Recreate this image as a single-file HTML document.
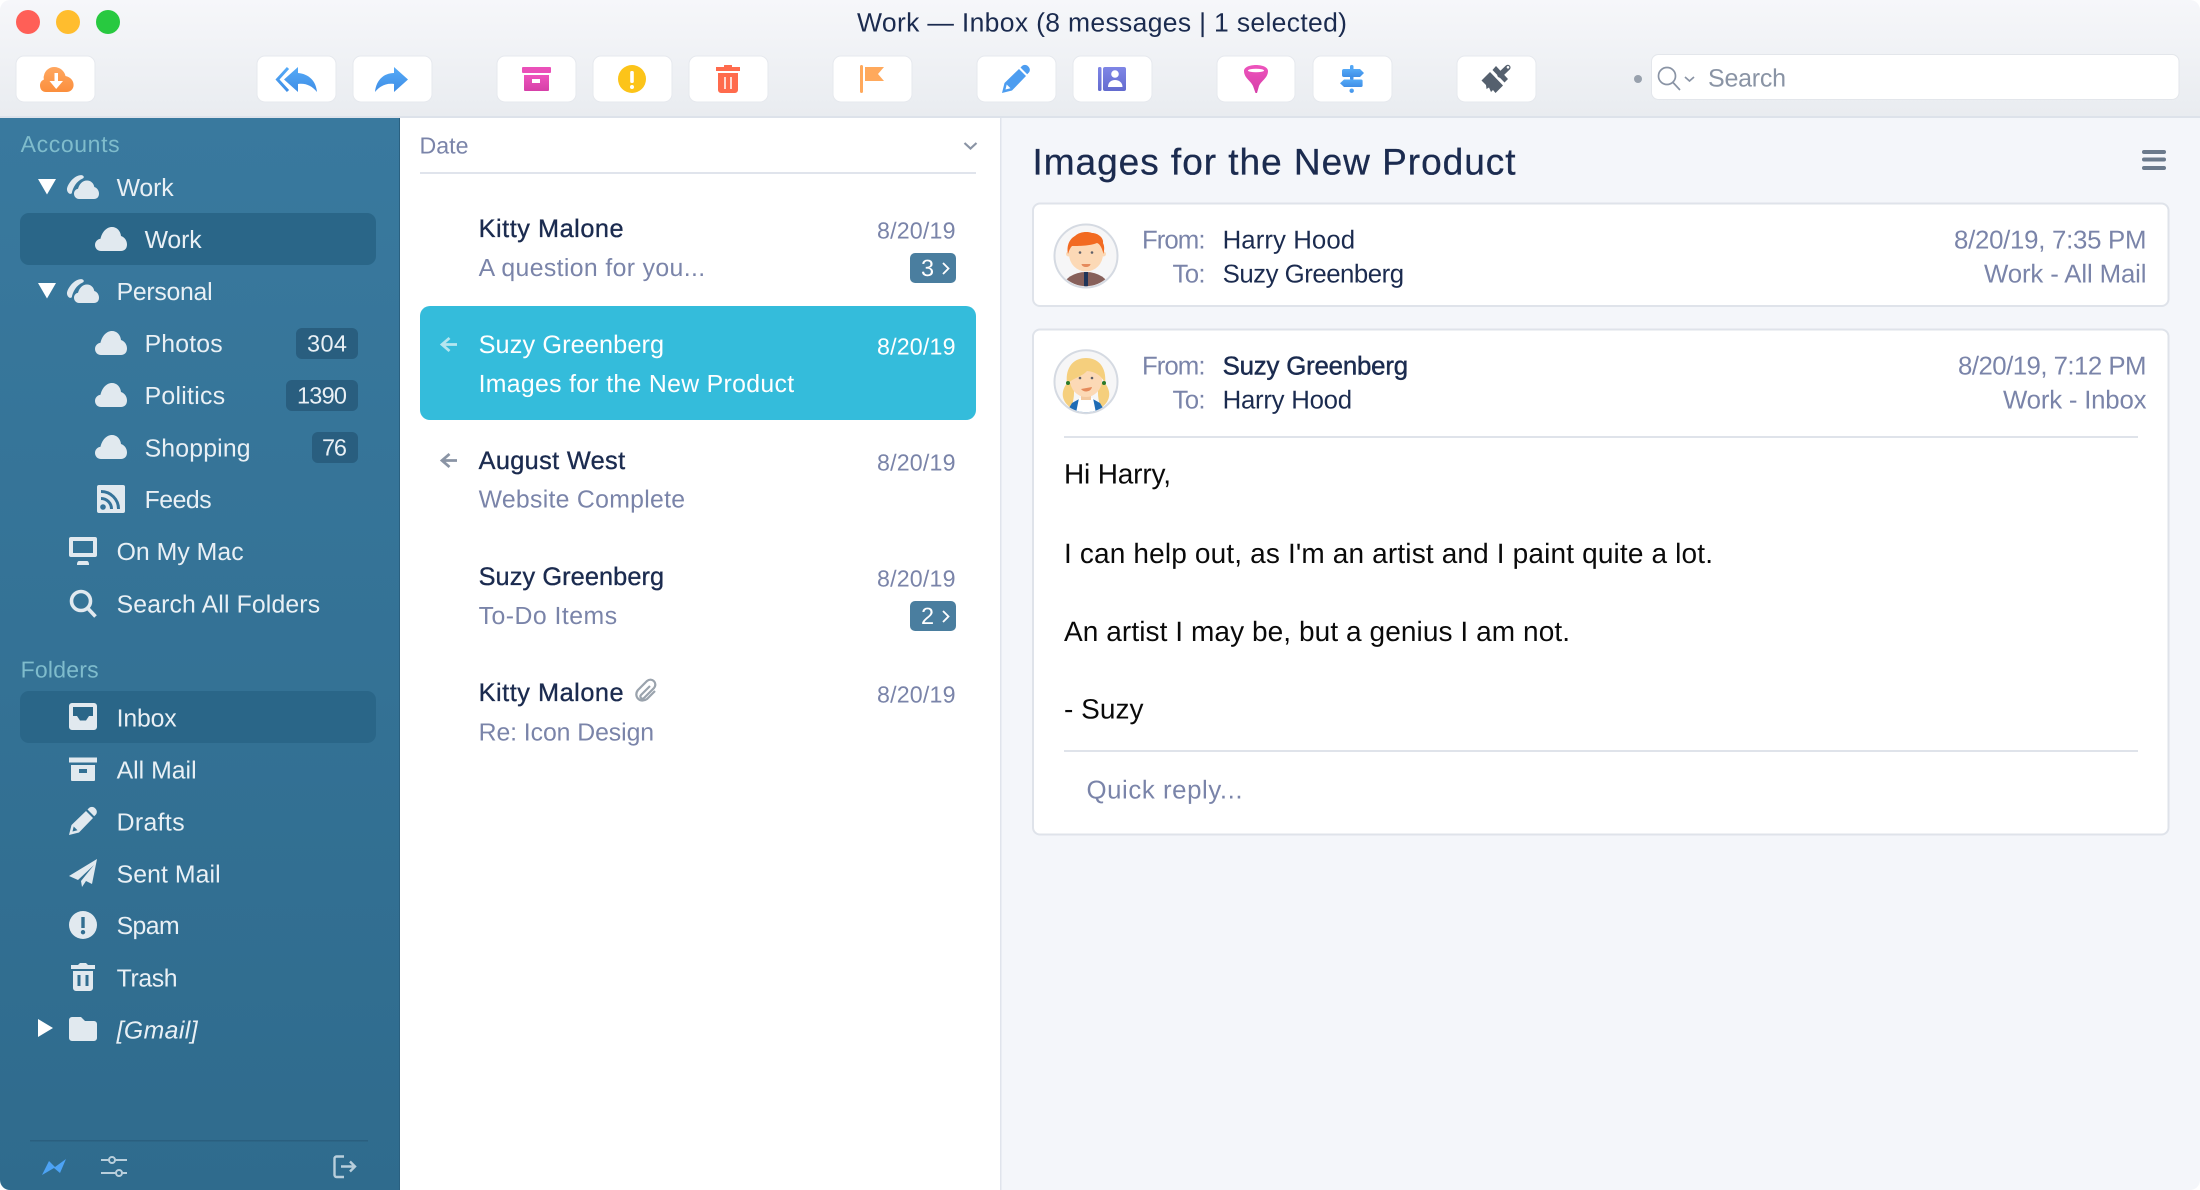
<!DOCTYPE html>
<html lang="en"><head><meta charset="utf-8"><title>Work — Inbox</title>
<style>
html,body{margin:0;padding:0;background:#fff;width:2200px;height:1190px;overflow:hidden}
svg{display:block}
text{font-family:"Liberation Sans",sans-serif;text-rendering:geometricPrecision;white-space:pre}
.s{font-size:24.8px;fill:#e9f0f5;transform:translate(-.4px,.4px)}
.h{font-size:23px;fill:#7fbccc;transform:translate(-.4px,.4px)}
.c{font-size:23.5px;fill:#e9f0f5}
.n{font-size:25.3px;fill:#1b2b4f;stroke:#1b2b4f;stroke-width:.35px;transform:translate(-.4px,.6px)}
.m{font-size:24.8px;fill:#7a84a9;transform:translate(-.4px,.6px)}
.d{font-size:23.2px;fill:#7a84a9}
.w{fill:#fff;stroke:none}
.f{font-size:25.8px;fill:#7a84a9;transform:translateY(.4px)}
.v{font-size:25.8px;fill:#1b2b4f;transform:translate(-.4px,.4px)}
.b{font-size:28px;fill:#0a0a0a;transform:translateY(.5px)}
.i{fill:#e1e9ef}
.btn{fill:#fff;stroke:#e6e9ee;stroke-width:1}
.card{fill:#fff;stroke:#dfe3ea;stroke-width:2}
</style></head><body>
<svg width="2200" height="1190" viewBox="0 0 2200 1190" xmlns="http://www.w3.org/2000/svg">
<defs>
<linearGradient id="tb" x1="0" y1="0" x2="0" y2="1"><stop offset="0" stop-color="#f6f7fa"/><stop offset="1" stop-color="#e9ecf0"/></linearGradient>
<linearGradient id="sb" x1="0" y1="0" x2="0" y2="1"><stop offset="0" stop-color="#39799e"/><stop offset="1" stop-color="#2f6b8d"/></linearGradient>
<linearGradient id="org" x1="0" y1="0" x2="0" y2="1"><stop offset="0" stop-color="#ffa760"/><stop offset="1" stop-color="#fb8f3d"/></linearGradient>
<linearGradient id="pnk" x1="0" y1="0" x2="0" y2="1"><stop offset="0" stop-color="#ee54bd"/><stop offset="1" stop-color="#d63fa8"/></linearGradient>
<linearGradient id="blu" x1="0" y1="0" x2="0" y2="1"><stop offset="0" stop-color="#55aaf7"/><stop offset="1" stop-color="#3f8ee6"/></linearGradient>
<linearGradient id="pur" x1="0" y1="0" x2="0" y2="1"><stop offset="0" stop-color="#7f86e6"/><stop offset="1" stop-color="#636bcf"/></linearGradient>
<clipPath id="win"><rect width="2200" height="1190" rx="10"/></clipPath>
<clipPath id="a1"><circle cx="1086" cy="255.7" r="30.5"/></clipPath>
<clipPath id="a2"><circle cx="1086" cy="381.7" r="30.5"/></clipPath>
<symbol id="cloud" viewBox="0 0 32 24" overflow="visible"><path d="M6 24C2.5 24 0 21.2 0 18 0 14.6 2.6 12.2 5.5 11.8 7 5 11.5 0 17 0 22 0 25.5 4 26 9 29.5 10 32 13.5 32 17.5 32 21.5 29.5 24 26 24Z"/></symbol>
<symbol id="dcloud" viewBox="0 0 32 24" overflow="visible"><path d="M12 24C9.5 24 7 22 7 18.8 7 16 9 14.2 11 13.8 12.3 9 15.5 5.5 20 5.5 24 5.5 26.8 8.5 27.3 12 30 12.8 32 15.5 32 18.5 32 22 30 24 27 24Z"/><path d="M15 .2C9 -.8 1.5 7 0 13.5-.5 16.5 2.5 20.5 4.8 18.2 5.6 13 9.5 6 15.5 3.6 17.5 2.8 17 .6 15 .2Z"/></symbol>
<symbol id="pencil" viewBox="0 0 28 28" overflow="visible"><path fill-rule="evenodd" d="M0 28 2.5 18 17 4 24 11 10 25.5ZM3.500 24.500 8.500 23.300 4.700 19.500Z"/><path d="M18.500 2.500 20 1C22-.7 24.500-.5 26.300 1.500 28.300 3.500 28.300 6 26.700 7.800L25.200 9.300Z"/></symbol>
</defs>
<g clip-path="url(#win)">
<!-- toolbar -->
<rect width="2200" height="116" fill="url(#tb)"/>
<rect y="116" width="2200" height="2" fill="#dde2ea"/>
<circle cx="28" cy="22" r="12" fill="#ff5f57"/><circle cx="68" cy="22" r="12" fill="#ffbd2e"/><circle cx="108" cy="22" r="12" fill="#28c940"/>
<text x="857" y="31.500" font-size="26.5" fill="#1b2b4f" textLength="490">Work — Inbox (8 messages | 1 selected)</text>

<rect class="btn" x="16" y="56" width="79" height="46" rx="8"/>
<rect class="btn" x="257" y="56" width="79" height="46" rx="8"/>
<rect class="btn" x="353" y="56" width="79" height="46" rx="8"/>
<rect class="btn" x="497" y="56" width="79" height="46" rx="8"/>
<rect class="btn" x="593" y="56" width="79" height="46" rx="8"/>
<rect class="btn" x="689" y="56" width="79" height="46" rx="8"/>
<rect class="btn" x="833" y="56" width="79" height="46" rx="8"/>
<rect class="btn" x="977" y="56" width="79" height="46" rx="8"/>
<rect class="btn" x="1073" y="56" width="79" height="46" rx="8"/>
<rect class="btn" x="1217" y="56" width="78" height="46" rx="8"/>
<rect class="btn" x="1313" y="56" width="79" height="46" rx="8"/>
<rect class="btn" x="1457" y="56" width="79" height="46" rx="8"/>

<!-- toolbar icons -->
<path fill="url(#org)" d="M46 92C42 92 40 89 40 85.500 40 82.500 41.500 80.500 44 79.500 43.500 78 43.500 77 44 75.500 45 70 50 67 54 67 60 67 64.500 71 65.500 76 70.500 77 73.600 80.500 73.600 85 73.600 89 70.500 92 66.500 92Z"/>
<path fill="#fff" d="M54.500 73h3.500v8h5l-6.800 8-6.700-8h5z"/>
<path fill="none" stroke="url(#blu)" stroke-width="3" d="M288 68 277.500 79.500 288 91"/>
<path fill="url(#blu)" d="M298 67 284 79.500 298 92V84C306 83 312 86 317 92 316 81 309 74 298 73Z"/>
<path fill="url(#blu)" d="M394 67 408 79.500 394 92V84C386 83 380 86 375 92 376 80 384 73 394 73Z"/>
<rect x="522" y="67" width="29" height="6" rx="1" fill="#ea50b9"/>
<path fill="url(#pnk)" fill-rule="evenodd" d="M524 75H549V90A1 1 0 0 1 548 91H525A1 1 0 0 1 524 90ZM532 79V83H540V79Z"/>
<circle cx="632" cy="79" r="14" fill="#fcc419"/><rect x="630.200" y="71" width="3.600" height="12" rx="1.500" fill="#fff"/><circle cx="632" cy="87" r="2" fill="#fff"/>
<path fill="#ff6b4d" d="M724 67V65.500A.5.5 0 0 1 724.500 65H731.500A.5.5 0 0 1 732 65.500V67H740V71H716V67ZM718 73H738V90A3 3 0 0 1 735 93H721A3 3 0 0 1 718 90Z"/>
<path stroke="#fff" stroke-width="1.500" d="M725 77V89M731 77V89"/>
<rect x="860" y="65" width="3" height="28" rx="1.500" fill="#ffa95c"/><path fill="#ffa95c" d="M865 67H884L878 74 884 81H865Z"/>
<use href="#pencil" x="1002" y="65" width="28" height="28" fill="#4d9df0"/>
<rect x="1098" y="67" width="3.500" height="24" rx="1.500" fill="url(#pur)"/>
<rect x="1103" y="67" width="23" height="24" rx="2" fill="url(#pur)"/>
<circle cx="1115" cy="74" r="3.800" fill="#fff"/><path fill="#fff" d="M1108 87C1108 82.500 1111 80 1115 80 1119 80 1122.500 82.500 1122.500 87Z"/>
<path fill="url(#pnk)" d="M1244 71C1244 67 1250 65 1256 65 1262 65 1268 67 1268 71 1268 78 1261 81 1259 86L1257 93H1255.500L1253 86C1251 81 1244 78 1244 71Z"/>
<ellipse cx="1256" cy="70.500" rx="8" ry="1.800" fill="#fff"/>
<g fill="url(#blu)"><rect x="1350" y="65" width="3.500" height="15" rx="1.500"/><path d="M1344 69H1360L1364 73 1360 77H1344Q1342 77 1342 75V71Q1342 69 1344 69Z"/><path d="M1344 79.500H1361Q1362.600 79.500 1362.600 81V85.500Q1362.600 87 1361 87H1344L1340 83.200Z"/><circle cx="1351.700" cy="90.700" r="2.200"/></g>
<g fill="#55606e"><path d="M1481.500 80.500 1490 72 1503 85.500 1495.500 93 1493 90 1491 92 1489 87.500 1486.500 89 1486 85Z"/><path d="M1492.500 70 1496 66 1508 79 1504.500 82.500Z"/></g>
<path stroke="#55606e" stroke-width="5.500" stroke-linecap="round" d="M1500 75 1507.800 67.500"/>
<circle cx="1508" cy="67.300" r="1.300" fill="#fff"/>

<!-- search -->
<circle cx="1638" cy="79" r="4" fill="#98a1ad"/>
<rect x="1651.500" y="54.500" width="527.500" height="45" rx="7" fill="#fff" stroke="#e3e6eb"/>
<circle cx="1667" cy="76" r="8.500" fill="none" stroke="#8a94a5" stroke-width="1.700"/>
<path stroke="#8a94a5" stroke-width="1.700" fill="none" d="M1673 82.500 1680 90M1685 77 1689.500 81 1694 77"/>
<text x="1708" y="86.300" font-size="25" fill="#8a94a5" textLength="78">Search</text>

<!-- sidebar -->
<rect y="118" width="400" height="1072" fill="url(#sb)"/>
<rect x="399" y="118" width="1" height="1072" fill="#2a6080"/>
<text class="h" x="21" y="151.500" textLength="99">Accounts</text>
<rect x="20" y="213" width="356" height="52" rx="9" fill="#2a6688"/>
<path fill="#fff" d="M38 179H56L47 194.500ZM38 283H56L47 298.500Z"/>
<use href="#dcloud" x="67" y="175" width="32" height="24" class="i"/>
<text class="s" x="117" y="195.500" textLength="57">Work</text>
<use href="#cloud" x="95" y="227" width="32" height="24" class="i"/>
<text class="s" x="145" y="247.500" textLength="57">Work</text>
<use href="#dcloud" x="67" y="279" width="32" height="24" class="i"/>
<text class="s" x="117" y="299.500" textLength="96">Personal</text>
<use href="#cloud" x="95" y="331" width="32" height="24" class="i"/>
<text class="s" x="145" y="351.500" textLength="78">Photos</text>
<rect x="296" y="328" width="62" height="31" rx="6" fill="#295e7f"/><text class="c" x="307" y="351.500" textLength="40">304</text>
<use href="#cloud" x="95" y="383" width="32" height="24" class="i"/>
<text class="s" x="145" y="403.500" textLength="80.500">Politics</text>
<rect x="286" y="380" width="72" height="31" rx="6" fill="#295e7f"/><text class="c" x="297" y="403.500" textLength="50">1390</text>
<use href="#cloud" x="95" y="435" width="32" height="24" class="i"/>
<text class="s" x="145" y="456" textLength="106">Shopping</text>
<rect x="312" y="432" width="46" height="31" rx="6" fill="#295e7f"/><text class="c" x="322" y="455.500" textLength="25">76</text>
<rect x="97" y="485" width="28" height="28" rx="2" class="i"/>
<circle cx="103" cy="507" r="2.800" fill="#35739a"/>
<path fill="none" stroke="#35739a" stroke-width="3" d="M101 498.500A10.500 10.500 0 0 1 111.500 509M101 491.500A17.500 17.500 0 0 1 118.500 509"/>
<text class="s" x="145" y="507.500" textLength="67">Feeds</text>
<path class="i" fill-rule="evenodd" d="M71 537H95A2 2 0 0 1 97 539V555A2 2 0 0 1 95 557H71A2 2 0 0 1 69 555V539A2 2 0 0 1 71 537ZM73 541V553H93V541ZM79 561H87Q89 561 89 565H77Q77 561 79 561Z"/>
<text class="s" x="117" y="559.500" textLength="127">On My Mac</text>
<circle cx="81" cy="601" r="9.500" fill="none" stroke="#e1e9ef" stroke-width="3.600"/>
<path stroke="#e1e9ef" stroke-width="3.600" d="M87.500 608 95.500 616.500"/>
<text class="s" x="117" y="612" textLength="203.500">Search All Folders</text>

<text class="h" x="21" y="677" textLength="78">Folders</text>
<rect x="20" y="691" width="356" height="52" rx="9" fill="#2a6688"/>
<path class="i" fill-rule="evenodd" d="M72 703H94A3 3 0 0 1 97 706V727A3 3 0 0 1 94 730H72A3 3 0 0 1 69 727V706A3 3 0 0 1 72 703ZM73 707V716H77L80 720.500H86L89 716H93V707Z"/>
<text class="s" x="117" y="726" textLength="60">Inbox</text>
<path class="i" fill-rule="evenodd" d="M69 757.500H97V762.500H69ZM71 765H95V780A1 1 0 0 1 94 781H72A1 1 0 0 1 71 780ZM79 769V773H87V769Z"/>
<text class="s" x="117" y="778" textLength="80">All Mail</text>
<use href="#pencil" x="69" y="807" width="28" height="28" class="i"/>
<text class="s" x="117" y="830" textLength="68">Drafts</text>
<path class="i" d="M97 859 69 876 78 880 94 865 81 881 82 887 86 881 92 884Z"/>
<text class="s" x="117" y="882" textLength="104">Sent Mail</text>
<path class="i" fill-rule="evenodd" d="M83 911A14 14 0 1 1 83 939 14 14 0 1 1 83 911ZM81.300 917V928H84.700V917ZM83 930A2.200 2.200 0 1 0 83 934.400 2.200 2.200 0 1 0 83 930Z"/>
<text class="s" x="117" y="933.500" textLength="63">Spam</text>
<path class="i" fill-rule="evenodd" d="M78 965 80 963H86L88 965H95V969H71V965ZM73 971H93V988A3 3 0 0 1 90 991H76A3 3 0 0 1 73 988ZM77.500 975V986H80.500V975ZM85.500 975V986H88.500V975Z"/>
<text class="s" x="117" y="986" textLength="61">Trash</text>
<path fill="#fff" d="M38 1019 53 1028 38 1037Z"/>
<path class="i" d="M69 1020A3 3 0 0 1 72 1017H81L85 1021H94A3 3 0 0 1 97 1024V1038A3 3 0 0 1 94 1041H72A3 3 0 0 1 69 1038Z"/>
<text class="s" x="117" y="1038" font-style="italic" textLength="81">[Gmail]</text>
<rect x="30" y="1140" width="338" height="1.500" fill="#2a5f7f"/>
<path fill="#4da3f5" d="M42 1175 49 1161 55 1167 66 1159 60 1173 54 1168Z"/>
<path stroke="#b9cfdc" stroke-width="2" d="M101 1160H127M101 1173H127"/>
<circle cx="112" cy="1160" r="3" fill="#2f6b8d" stroke="#b9cfdc" stroke-width="2"/>
<circle cx="119" cy="1173" r="3" fill="#2f6b8d" stroke="#b9cfdc" stroke-width="2"/>
<path fill="none" stroke="#b9cfdc" stroke-width="2.400" d="M344 1156.500H336.500A2 2 0 0 0 334.500 1158.500V1175A2 2 0 0 0 336.500 1177H344M341 1166.500H355M350 1161.500 355 1166.500 350 1171.500"/>

<!-- list column -->
<rect x="400" y="118" width="600" height="1072" fill="#fff"/>
<rect x="1000" y="118" width="1.500" height="1072" fill="#e0e4ec"/>
<text class="d" x="419.500" y="153.500" textLength="49">Date</text>
<path fill="none" stroke="#8a94a5" stroke-width="2.200" d="M964.500 143 970.500 148.500 976.500 143"/>
<rect x="420" y="172" width="556" height="2" fill="#e0e4ec"/>

<text class="n" x="479" y="236.500" textLength="145">Kitty Malone</text>
<text class="d" x="877" y="238.300" textLength="78.500">8/20/19</text>
<text class="m" x="479" y="275.500" textLength="226.500">A question for you...</text>
<rect x="910" y="253" width="46" height="30" rx="5" fill="#4a7e9f"/>
<text class="c" x="921" y="276" style="fill:#fff">3</text>
<path fill="none" stroke="#fff" stroke-width="1.800" d="M943 263 948.500 268.500 943 274"/>

<rect x="420" y="306" width="556" height="114" rx="10" fill="#34bcdb"/>
<path fill="none" stroke="#b5e6f0" stroke-width="2.800" d="M457 344.500H442.500M449.500 338 442 344.500 449.500 351"/>
<text class="n w" x="479" y="352.500" textLength="185.500">Suzy Greenberg</text>
<text class="d" x="877" y="354.300" textLength="78.500" style="fill:#fff">8/20/19</text>
<text class="m" x="479" y="391.500" textLength="315.500" style="fill:#fff">Images for the New Product</text>

<path fill="none" stroke="#8a94a5" stroke-width="2.800" d="M457 460.500H442.500M449.500 454 442 460.500 449.500 467"/>
<text class="n" x="479" y="468.500" textLength="146.500">August West</text>
<text class="d" x="877" y="470.300" textLength="78.500">8/20/19</text>
<text class="m" x="479" y="507" textLength="206.500">Website Complete</text>

<text class="n" x="479" y="584.500" textLength="185.500">Suzy Greenberg</text>
<text class="d" x="877" y="586.300" textLength="78.500">8/20/19</text>
<text class="m" x="479" y="623.500" textLength="138.500">To-Do Items</text>
<rect x="910" y="601" width="46" height="30" rx="5" fill="#4a7e9f"/>
<text class="c" x="921" y="624" style="fill:#fff">2</text>
<path fill="none" stroke="#fff" stroke-width="1.800" d="M943 611 948.500 616.500 943 622"/>

<text class="n" x="479" y="700.500" textLength="145">Kitty Malone</text>
<path fill="none" stroke="#9aa3ad" stroke-width="2.200" d="M650 686 641 695C639 697 642 700 644 698L654 688C658 683 652 677 647 681L638 690C633 696 640 704 647 699L655 691"/>
<text class="d" x="877" y="702.300" textLength="78.500">8/20/19</text>
<text class="m" x="479" y="740" textLength="175.500">Re: Icon Design</text>

<!-- message pane -->
<rect x="1001.500" y="118" width="1198.500" height="1072" fill="#f4f6fa"/>
<text x="1032.500" y="174.700" font-size="37" fill="#1b2b4f" stroke="#1b2b4f" stroke-width=".3" textLength="483">Images for the New Product</text>
<rect x="2142" y="150" width="24" height="4" rx="2" fill="#6b7a8c"/><rect x="2142" y="157.500" width="24" height="4" rx="2" fill="#6b7a8c"/><rect x="2142" y="166" width="24" height="4" rx="2" fill="#6b7a8c"/>

<rect class="card" x="1033" y="203.500" width="1135.500" height="102.500" rx="7"/>
<circle cx="1086" cy="256" r="31.500" fill="#f6f6f7" stroke="#d5dae2" stroke-width="2"/>
<g clip-path="url(#a1)">
<ellipse cx="1086" cy="288" rx="23" ry="16" fill="#87605a"/>
<path fill="#1f3559" d="M1084 272H1088V290H1084Z"/>
<circle cx="1068.500" cy="254" r="2.500" fill="#fcd9b6"/><circle cx="1103.500" cy="254" r="2.500" fill="#fcd9b6"/>
<ellipse cx="1086" cy="254" rx="17" ry="17.500" fill="#fcd9b6"/>
<path fill="#f26a21" d="M1068 254C1066 244 1071 238 1075 236 1079 232 1087 231 1092 233 1098 233 1104 238 1103 243 1105 247 1104 251 1103.500 254 1102 248 1100 244 1097 243 1090 246 1078 246 1072 246 1070 248 1069 251 1068 254Z"/>
<circle cx="1080" cy="252.500" r="1.300" fill="#5d5f68"/><circle cx="1092" cy="252.500" r="1.300" fill="#5d5f68"/>
<path fill="#e58a5b" d="M1081.500 264H1090.500C1090 268 1082 268 1081.500 264Z"/>
</g>

<rect class="card" x="1033" y="329.500" width="1135.500" height="505" rx="7"/>
<circle cx="1086" cy="381.700" r="31.500" fill="#f6f6f7" stroke="#d5dae2" stroke-width="2"/>
<g clip-path="url(#a2)">
<path fill="#f5cf7d" d="M1068 382C1061 390 1060 400 1071 408 1074 400 1075 392 1073 384ZM1104 382C1111 390 1112 400 1101 408 1098 400 1097 392 1099 384Z"/>
<path fill="#1f6cb5" d="M1066 413 1072 403 1081 398H1091L1100 403 1106 413Z"/>
<path fill="#fff" d="M1079 398H1093L1096 413H1076Z"/>
<rect x="1081" y="390" width="10" height="10" fill="#f3c9a0"/>
<ellipse cx="1086" cy="380" rx="16" ry="17" fill="#fcd9b6"/>
<path fill="#f5cf7d" d="M1067 384C1065 368 1073 358 1086 358 1099 358 1107 368 1105 384 1103 378 1098 372 1087 371 1083 376 1073 378 1067 384Z"/>
<circle cx="1068" cy="383" r="2" fill="#2a7a2a"/><circle cx="1104" cy="383" r="2" fill="#2a7a2a"/>
<circle cx="1080" cy="378" r="1.300" fill="#5d5f68"/><circle cx="1092" cy="378" r="1.300" fill="#5d5f68"/>
<path fill="#e58a5b" d="M1081 389 1092 387C1091 392 1084 393 1081 389Z"/>
</g>

<text class="f" x="1142" y="248" textLength="63.500">From:</text>
<text class="f" x="1172.500" y="282" textLength="33">To:</text>
<text class="v" x="1223" y="248" textLength="132.500">Harry Hood</text>
<text class="v" x="1223" y="282" textLength="181.500">Suzy Greenberg</text>
<text class="f" x="1954" y="248" textLength="192.500">8/20/19, 7:35 PM</text>
<text class="f" x="1984" y="282" textLength="162.500">Work - All Mail</text>

<text class="f" x="1142" y="374" textLength="63.500">From:</text>
<text class="f" x="1172.500" y="408" textLength="33">To:</text>
<text class="v" x="1223" y="374" stroke="#1b2b4f" stroke-width=".45" textLength="185.500">Suzy Greenberg</text>
<text class="v" x="1223" y="408" textLength="129.500">Harry Hood</text>
<text class="f" x="1958" y="374" textLength="188.500">8/20/19, 7:12 PM</text>
<text class="f" x="2003" y="408" textLength="143.500">Work - Inbox</text>

<rect x="1064" y="436" width="1074" height="2" fill="#dfe3ea"/>
<text class="b" x="1064" y="483" textLength="107">Hi Harry,</text>
<text class="b" x="1064" y="562.500" textLength="649">I can help out, as I'm an artist and I paint quite a lot.</text>
<text class="b" x="1064" y="640.500" textLength="506">An artist I may be, but a genius I am not.</text>
<text class="b" x="1064" y="718" textLength="79.500">- Suzy</text>
<rect x="1064" y="750" width="1074" height="2" fill="#dfe3ea"/>
<text class="f" x="1086.500" y="798" textLength="156">Quick reply...</text>
</g>
</svg>
</body></html>
